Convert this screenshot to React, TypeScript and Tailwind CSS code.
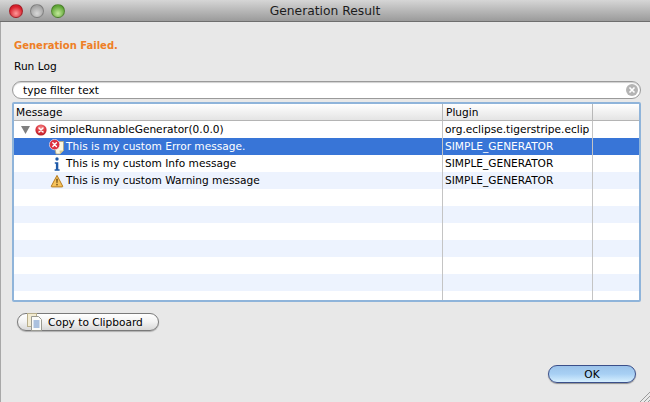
import React from "react";

const font = "font-['DejaVu_Sans',sans-serif]";

const ErrorDot = ({ size = 12 }: { size?: number }) => (
  <svg width={size} height={size} viewBox="0 0 12 12" className="shrink-0">
    <defs>
      <radialGradient id="errdot" cx="50%" cy="30%" r="75%">
        <stop offset="0%" stopColor="#f58a8a" />
        <stop offset="60%" stopColor="#d8303a" />
        <stop offset="100%" stopColor="#a81c26" />
      </radialGradient>
    </defs>
    <circle cx="6" cy="6" r="5.6" fill="url(#errdot)" />
    <path d="M4 4l4 4M8 4l-4 4" stroke="#fff" strokeWidth="1.5" strokeLinecap="round" />
  </svg>
);

const ErrorLogIcon = () => (
  <svg width="16" height="16" viewBox="0 0 16 16" className="shrink-0">
    <path d="M5 2.5h9.5v9l-3.5 3.5H7z" fill="#fbf6df" stroke="#b9a878" strokeWidth="0.8" />
    <path d="M14.5 11.5L11 15l-.5-3.5z" fill="#d8c98e" />
    <circle cx="5.6" cy="5.6" r="5.2" fill="#dc2f3e" stroke="#fff" strokeWidth="0.6" />
    <path d="M3.8 3.8l3.6 3.6M7.4 3.8l-3.6 3.6" stroke="#fff" strokeWidth="1.4" strokeLinecap="round" />
  </svg>
);

const InfoIcon = () => (
  <svg width="16" height="16" viewBox="0 0 16 16" className="shrink-0">
    <circle cx="8" cy="3" r="1.7" fill="#1e5aa8" />
    <path d="M5.8 6.2h3.5v7h1.3v1.5H5.6v-1.5h1.3V7.7H5.8z" fill="#1e5aa8" />
  </svg>
);

const WarningIcon = () => (
  <svg width="16" height="16" viewBox="0 0 16 16" className="shrink-0">
    <path d="M8 2.4L13.6 13a.6.6 0 0 1-.5.9H2.9a.6.6 0 0 1-.5-.9z" fill="#f6c35c" stroke="#b57a1e" strokeWidth="1" strokeLinejoin="round" />
    <path d="M7.3 5.8h1.4l-.3 4.4h-.8z" fill="#5b3b0c" />
    <circle cx="8" cy="11.8" r="0.8" fill="#5b3b0c" />
  </svg>
);

const ClipboardIcon = () => (
  <svg width="16" height="18" viewBox="0 0 16 18" className="shrink-0">
    <rect x="0.5" y="0.5" width="9" height="13" fill="#f3ecd2" stroke="#b8ae8c" />
    <path d="M4.5 3.5h7l3 3v11h-10z" fill="#fbfbf8" stroke="#9a9a92" />
    <path d="M6.5 8h6M6.5 10h6M6.5 12h6M6.5 14h6" stroke="#5d87c4" strokeWidth="1" />
  </svg>
);

const Light = ({ className }: { className: string }) => (
  <div className={`w-[14px] h-[14px] rounded-full border border-[#00000040] ${className}`} />
);

type Row = {
  indent: "root" | "child" | "none";
  icon?: React.ReactNode;
  msg?: string;
  plugin?: string;
  selected?: boolean;
  striped?: boolean;
};

const rows: Row[] = [
  { indent: "root", icon: <ErrorDot />, msg: "simpleRunnableGenerator(0.0.0)", plugin: "org.eclipse.tigerstripe.eclip" },
  { indent: "child", icon: <ErrorLogIcon />, msg: "This is my custom Error message.", plugin: "SIMPLE_GENERATOR", selected: true },
  { indent: "child", icon: <InfoIcon />, msg: "This is my custom Info message", plugin: "SIMPLE_GENERATOR" },
  { indent: "child", icon: <WarningIcon />, msg: "This is my custom Warning message", plugin: "SIMPLE_GENERATOR", striped: true },
  { indent: "none" },
  { indent: "none", striped: true },
  { indent: "none" },
  { indent: "none", striped: true },
  { indent: "none" },
  { indent: "none", striped: true },
  { indent: "none" },
];

export default function App() {
  return (
    <div className={`w-[650px] h-[402px] overflow-hidden bg-[#e8e8e8] flex flex-col text-[10.6px] text-black ${font}`}>
      <div className="relative h-[22px] shrink-0 flex items-center gap-[7px] pl-[9px] bg-gradient-to-b from-[#d6d6d6] to-[#9b9b9b] border-b border-[#6e6e6e]">
        <Light className="bg-[radial-gradient(circle_at_50%_70%,#ff9a9a,#d8202c_65%)]" />
        <Light className="bg-[radial-gradient(circle_at_50%_70%,#d8d8d8,#a4a4a4_70%)]" />
        <Light className="bg-[radial-gradient(circle_at_50%_70%,#c4ea9c,#5fa636_70%)]" />
        <div className="absolute inset-0 flex items-center justify-center pt-[2px] text-[12.3px] text-[#1c1c1c]">
          Generation Result
        </div>
      </div>

      <div className="flex-1 flex flex-col border-l border-[#a8a8a8] pl-[10px] pr-[9px] relative">
        <div className="pl-[3px] pt-[17px] h-[34px] font-bold text-[10px] leading-[13px] text-[#ee7f26]">Generation Failed.</div>
        <div className="pl-[3px] pt-[3px] h-[25px] leading-[15px]">Run Log</div>

        <div className="h-[18px] flex items-center justify-between ml-[1px] rounded-full bg-white border border-[#9a9a9a] shadow-[inset_0_1px_1px_#00000030] pl-[10px] pr-[2px]">
          <span className="pt-[1px]">type filter text</span>
          <span className="w-[12px] h-[12px] rounded-full bg-[#b4b4b4] text-white flex items-center justify-center">
            <svg width="8" height="8" viewBox="0 0 8 8">
              <path d="M1.5 1.5l5 5M6.5 1.5l-5 5" stroke="#fff" strokeWidth="1.6" />
            </svg>
          </span>
        </div>

        <div className="mt-[3px] h-[200px] border-2 border-[#8fb4da] rounded-[2px] bg-white overflow-hidden flex flex-col ml-[1px]">
          <div className="grid grid-cols-[429px_150px_1fr] h-[17px] shrink-0 bg-gradient-to-b from-white to-[#e4e4e4] border-b border-[#b4b4b4]">
            <div className="border-r border-[#b8b8b8] pl-[2px] leading-[17px]">Message</div>
            <div className="border-r border-[#b8b8b8] pl-[3px] leading-[17px]">Plugin</div>
            <div />
          </div>
          {rows.map((r, i) => (
            <div
              key={i}
              className={`grid grid-cols-[429px_150px_1fr] h-[17px] shrink-0 ${
                r.selected ? "bg-[#3875d7] text-white" : r.striped ? "bg-[#edf3fe]" : "bg-white"
              }`}
            >
              <div
                className={`border-r border-[#c4c4c4] flex items-center whitespace-nowrap overflow-hidden ${
                  r.indent === "child" ? "pl-[35px] gap-[1px]" : "pl-[7px] gap-[3px]"
                }`}
              >
                {r.indent === "root" && (
                  <svg width="9" height="8" viewBox="0 0 9 8" className="shrink-0 mr-[2px]">
                    <path d="M0 0h9L4.5 8z" fill="#808080" />
                  </svg>
                )}
                {r.icon}
                {r.msg && <span>{r.msg}</span>}
              </div>
              <div className="border-r border-[#c4c4c4] pl-[2px] leading-[17px] whitespace-nowrap overflow-hidden">{r.plugin}</div>
              <div />
            </div>
          ))}
        </div>

        <div className="mt-[11px] flex">
          <button className="ml-[6px] w-[142px] h-[18px] flex items-center gap-[5px] pl-[9px] rounded-full border border-[#7a7a7a] bg-gradient-to-b from-white via-[#f2f2f2] to-[#d8d8d8] shadow-[0_1px_1px_#00000040]">
            <ClipboardIcon />
            <span className="pt-[1px]">Copy to Clipboard</span>
          </button>
        </div>

        <div className="mt-[34px] flex justify-end">
          <button className="mr-[5px] w-[88px] h-[18px] rounded-full border border-[#3b4f8a] bg-gradient-to-b from-[#9cc3ea] via-[#a8d0f4] to-[#d6effe] shadow-[0_1px_1px_#00000060] leading-[16px]">
            OK
          </button>
        </div>

        <svg width="11" height="11" viewBox="0 0 11 11" className="absolute right-0 bottom-0">
          <path d="M11 1L1 11M11 5L5 11M11 9L9 11" stroke="#9a9a9a" strokeWidth="1" />
        </svg>
      </div>
    </div>
  );
}
